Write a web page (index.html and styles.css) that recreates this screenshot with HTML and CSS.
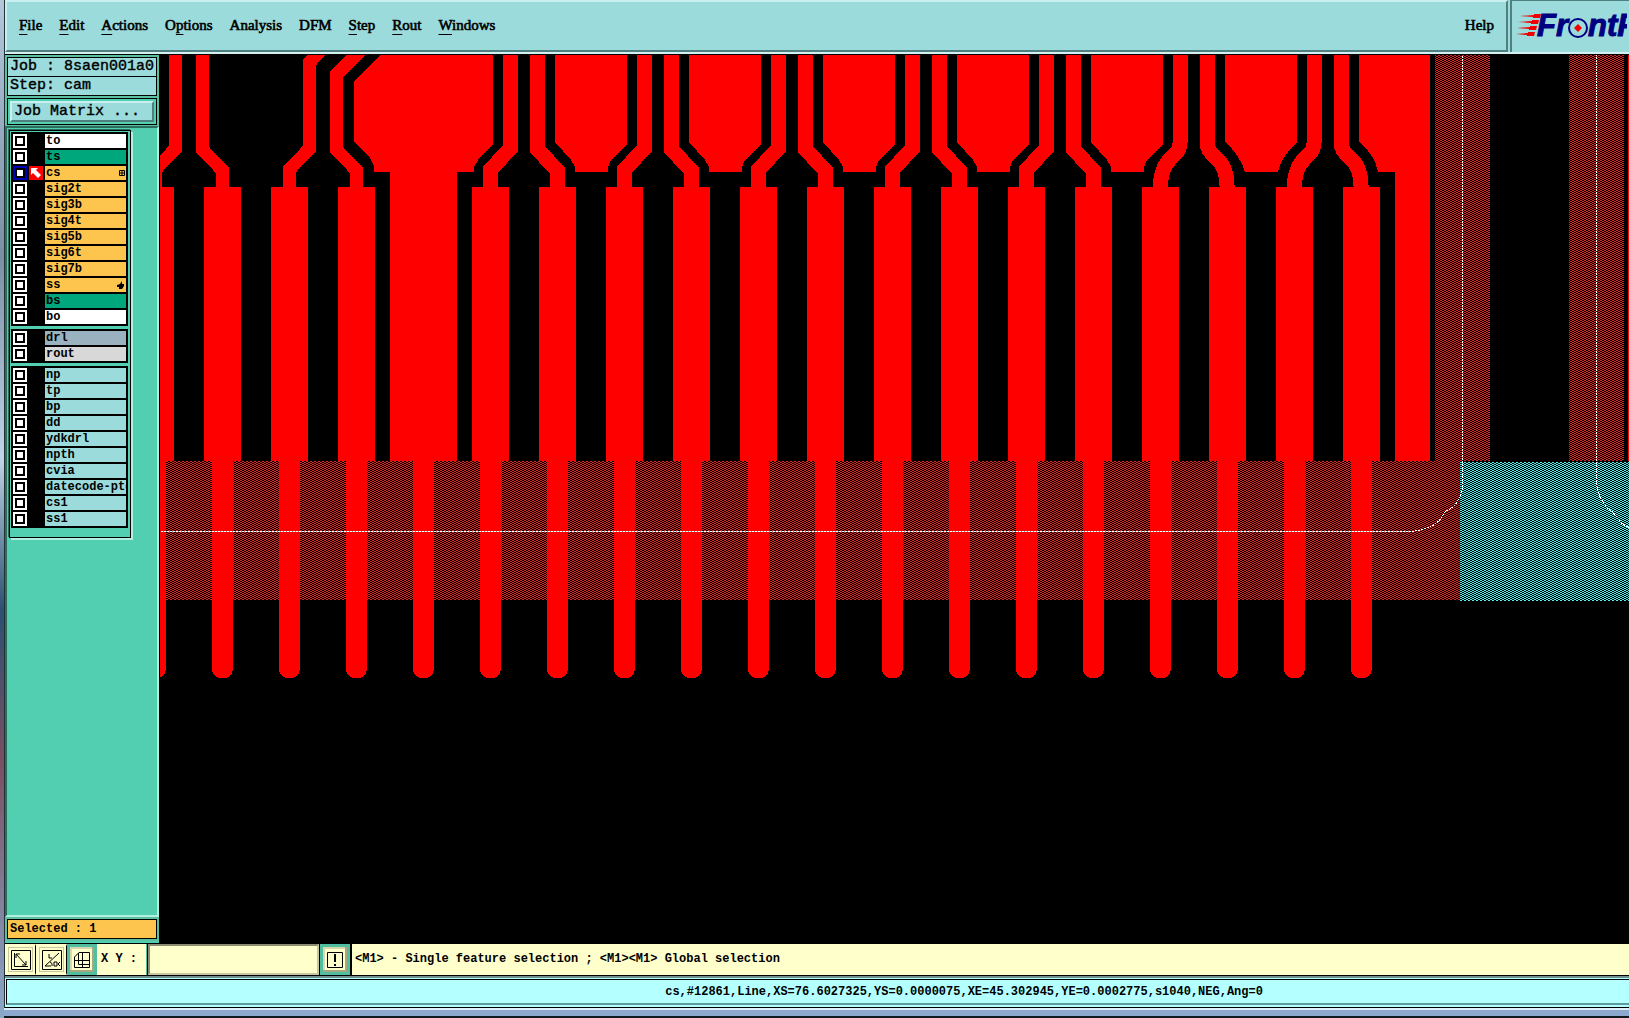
FILE: index.html
```html
<!DOCTYPE html>
<html lang="en">
<head>
    <meta charset="utf-8">
    <title>8saen001a0 / cam</title>
    <link rel="stylesheet" href="styles.css">
</head>
<body>
    <div class="window">
        <header class="top">
            <nav class="menu">
                <a href="#"><u>F</u>ile</a>
                <a href="#"><u>E</u>dit</a>
                <a href="#"><u>A</u>ctions</a>
                <a href="#">O<u>p</u>tions</a>
                <a href="#">Analysis</a>
                <a href="#">DFM</a>
                <a href="#"><u>S</u>tep</a>
                <a href="#"><u>R</u>out</a>
                <a href="#"><u>W</u>indows</a>
                <a href="#" class="help">Help</a>
            </nav>
            <div class="logo">
                <svg width="115" height="48">
                    <g fill="#f00000">
                        <path d="M8 15 L22 14 V13 H29 L28 17 H21 V16 Z"/>
                        <path d="M6 21 L20 20 V19 H27 L26 23 H19 V22 Z"/>
                        <path d="M5 27 L18 26 V25 H25 L24 29 H17 V28 Z"/>
                        <path d="M4 33 L16 32 V31 H23 L22 35 H15 V34 Z"/>
                    </g>
                    <text x="25" y="35">Fr</text>
                    <circle cx="66" cy="27" r="9" fill="none" stroke="#000080" stroke-width="2"/>
                    <path d="M66 23 L70 27 L66 31 L62 27 Z" fill="#f00000"/>
                    <text x="76" y="35">ntF</text>
                </svg>
            </div>
        </header>

        <main class="work">
            <aside class="side">
                <div class="job">
                    <div class="job-line">Job : 8saen001a0</div>
                    <div class="job-line">Step: cam</div>
                    <div class="matrix"><button type="button">Job Matrix ...</button></div>
                </div>
                <div class="layers">
                    <div class="list">
                        <div class="group">
                            <div class="layer white"><input type="checkbox" id="to"><label for="to">to</label></div>
                            <div class="layer green"><input type="checkbox" id="ts"><label for="ts">ts</label></div>
                            <div class="layer gold work-layer">
                                <input type="checkbox" id="cs">
                                <svg class="arrow" width="14" height="14"><rect width="14" height="14" fill="#f00"/><path d="M2 2 H9 L7 4 L12 9 L9 12 L4 7 L2 9 Z" fill="#fff"/></svg>
                                <label for="cs">cs<svg class="mark" width="6" height="6"><path d="M0.5 0.5 H5.5 V5.5 H0.5 Z M3 0 V6 M0 3 H6" fill="none" stroke="#000"/></svg></label>
                            </div>
                            <div class="layer gold"><input type="checkbox" id="sig2t"><label for="sig2t">sig2t</label></div>
                            <div class="layer gold"><input type="checkbox" id="sig3b"><label for="sig3b">sig3b</label></div>
                            <div class="layer gold"><input type="checkbox" id="sig4t"><label for="sig4t">sig4t</label></div>
                            <div class="layer gold"><input type="checkbox" id="sig5b"><label for="sig5b">sig5b</label></div>
                            <div class="layer gold"><input type="checkbox" id="sig6t"><label for="sig6t">sig6t</label></div>
                            <div class="layer gold"><input type="checkbox" id="sig7b"><label for="sig7b">sig7b</label></div>
                            <div class="layer gold"><input type="checkbox" id="ss"><label for="ss">ss<svg class="mark" width="8" height="8"><path d="M0 4 L3 3 L5 0 V3 H7 V5 L5 8 H2 V6 H0 Z"/></svg></label></div>
                            <div class="layer green"><input type="checkbox" id="bs"><label for="bs">bs</label></div>
                            <div class="layer white"><input type="checkbox" id="bo"><label for="bo">bo</label></div>
                        </div>
                        <div class="group">
                            <div class="layer steel"><input type="checkbox" id="drl"><label for="drl">drl</label></div>
                            <div class="layer gray"><input type="checkbox" id="rout"><label for="rout">rout</label></div>
                        </div>
                        <div class="group">
                            <div class="layer"><input type="checkbox" id="np"><label for="np">np</label></div>
                            <div class="layer"><input type="checkbox" id="tp"><label for="tp">tp</label></div>
                            <div class="layer"><input type="checkbox" id="bp"><label for="bp">bp</label></div>
                            <div class="layer"><input type="checkbox" id="dd"><label for="dd">dd</label></div>
                            <div class="layer"><input type="checkbox" id="ydkdrl"><label for="ydkdrl">ydkdrl</label></div>
                            <div class="layer"><input type="checkbox" id="npth"><label for="npth">npth</label></div>
                            <div class="layer"><input type="checkbox" id="cvia"><label for="cvia">cvia</label></div>
                            <div class="layer"><input type="checkbox" id="datecode"><label for="datecode">datecode-ptd</label></div>
                            <div class="layer"><input type="checkbox" id="cs1"><label for="cs1">cs1</label></div>
                            <div class="layer"><input type="checkbox" id="ss1"><label for="ss1">ss1</label></div>
                        </div>
                    </div>
                </div>
                <div class="selected">Selected : 1</div>
            </aside>

            <div class="board">
                <svg width="100%" height="100%" shape-rendering="crispEdges">
                    <defs>
                        <pattern id="hatchRed" width="4" height="2" patternUnits="userSpaceOnUse">
                            <rect width="2" height="1" fill="#dc2420"/>
                            <rect x="2" y="1" width="2" height="1" fill="#dc2420"/>
                        </pattern>
                        <pattern id="hatchCyan" width="4" height="2" patternUnits="userSpaceOnUse">
                            <rect width="2" height="1" fill="#50ecec"/>
                            <rect x="2" y="1" width="2" height="1" fill="#50ecec"/>
                        </pattern>
                        <!-- everything below is drawn around the pad centre, x = 0 -->
                        <rect id="finger" x="-10" y="440" width="21" height="238" rx="9"/>
                        <rect id="pad" x="-18" y="187" width="37" height="274"/>
                        <path id="toRight" d="M20 50 V149 L0 170 V190"/>
                        <path id="toLeft" d="M-20 50 V149 L0 170 V190"/>
                        <path id="arcRight" d="M20 50 V143 Q20 151 12 157 Q0 168 0 190"/>
                        <path id="arcLeft" d="M-20 50 V143 Q-20 150 -11 158 Q1 168 0 190"/>
                        <path id="pour" d="M-2 50 V142 L14 160 L18 167 V172 H51 V167 L54 160 L70 144 V50 Z"/>
                        <path id="pourArc" d="M-2 50 V142 Q13 155 18 172 H51 Q54 157 70 142 V50 Z"/>
                    </defs>
                    <g transform="translate(-160 -55)">
                        <!-- hatched keepout and board edge -->
                        <rect x="161" y="461" width="1299" height="139" fill="url(#hatchRed)"/>
                        <rect x="1435" y="54" width="55" height="407" fill="url(#hatchRed)"/>
                        <rect x="1569" y="54" width="55" height="407" fill="url(#hatchRed)"/>
                        <rect x="1460" y="462" width="1000" height="139" fill="url(#hatchCyan)"/>

                        <g fill="#f00">
                            <rect x="1628" y="54" width="20" height="407"/>
                            <path d="M385 50 L354 81 V142 L370 158 L374 166 V172 H390 V461 H457 V172 H474 V167 L478 160 L493 144 V50 Z"/>
                            <use href="#pour" x="557"/>
                            <use href="#pour" x="691"/>
                            <use href="#pour" x="825"/>
                            <use href="#pour" x="959"/>
                            <use href="#pour" x="1093"/>
                            <use href="#pourArc" x="1227"/>
                            <path d="M1359 50 V142 Q1375 155 1378 172 H1395 V461 H1430 V50 Z"/>

                            <use href="#finger" x="155"/><use href="#pad" x="155"/>
                            <use href="#finger" x="222"/><use href="#pad" x="222"/>
                            <use href="#finger" x="289"/><use href="#pad" x="289"/>
                            <use href="#finger" x="356"/><use href="#pad" x="356"/>
                            <use href="#finger" x="423"/>
                            <use href="#finger" x="490"/><use href="#pad" x="490"/>
                            <use href="#finger" x="557"/><use href="#pad" x="557"/>
                            <use href="#finger" x="624"/><use href="#pad" x="624"/>
                            <use href="#finger" x="691"/><use href="#pad" x="691"/>
                            <use href="#finger" x="758"/><use href="#pad" x="758"/>
                            <use href="#finger" x="825"/><use href="#pad" x="825"/>
                            <use href="#finger" x="892"/><use href="#pad" x="892"/>
                            <use href="#finger" x="959"/><use href="#pad" x="959"/>
                            <use href="#finger" x="1026"/><use href="#pad" x="1026"/>
                            <use href="#finger" x="1093"/><use href="#pad" x="1093"/>
                            <use href="#finger" x="1160"/><use href="#pad" x="1160"/>
                            <use href="#finger" x="1227"/><use href="#pad" x="1227"/>
                            <use href="#finger" x="1294"/><use href="#pad" x="1294"/>
                            <use href="#finger" x="1361"/><use href="#pad" x="1361"/>
                        </g>

                        <!-- traces -->
                        <g fill="none" stroke="#f00" stroke-width="13">
                            <use href="#toRight" x="155"/>
                            <use href="#toLeft" x="222"/>
                            <path d="M329 42 L309 63 V149 L289 170 V190"/>
                            <path d="M376 35 L336 75 V149 L356 170 V190"/>
                        </g>
                        <g fill="none" stroke="#f00" stroke-width="15">
                            <use href="#toRight" x="490"/><use href="#toLeft" x="557"/>
                            <use href="#toRight" x="624"/><use href="#toLeft" x="691"/>
                            <use href="#toRight" x="758"/><use href="#toLeft" x="825"/>
                            <use href="#toRight" x="892"/><use href="#toLeft" x="959"/>
                            <use href="#toRight" x="1026"/><use href="#toLeft" x="1093"/>
                            <use href="#arcRight" x="1160"/><use href="#arcLeft" x="1227"/>
                            <use href="#arcRight" x="1294"/><use href="#arcLeft" x="1361"/>
                        </g>

                        <!-- profile line -->
                        <path d="M161 531.5 H1410" stroke="#8c8c8c"/>
                        <path class="profile" d="M161 531.5 H1410 Q1427 530 1435 524 Q1440 521 1445 512 L1453 507 Q1459 501 1462 490 V54"/>
                        <path class="profile" d="M1596.5 54 V483 Q1597 495 1607 508 L1613 512 L1620 522 L1632 530"/>
                    </g>
                </svg>
            </div>
        </main>

        <footer>
            <div class="tools">
                <button type="button" class="tool" aria-label="Zoom to point">
                    <svg width="20" height="20"><path d="M0.5 0.5 H19.5 V19.5 H0.5 Z M3.5 3 V16.5 H17 M5 4 L15 15 M5 8 V4 H9 M11 15 H15 V11"/></svg>
                </button>
                <button type="button" class="tool" aria-label="Angle">
                    <svg width="20" height="20"><path d="M0.5 0.5 H19.5 V19.5 H0.5 Z M3 16 L17 3 M3 16 H9 M7 4 V8 H10 M8 12 Q11 13 10 16 M12 12 V16 H15 V12 Z M18 12 L16 14 L18 16"/></svg>
                </button>
                <button type="button" class="tool on" aria-label="Grid snap">
                    <svg width="16" height="16"><path d="M5 0.5 H15.5 V15.5 H0.5 V5 Z M8.5 0 V16 M0 8.5 H16 M4.5 1 V12.5 H15"/></svg>
                </button>
                <label class="xy" for="xy">X Y :</label>
                <input class="coords" type="text" id="xy">
                <button type="button" class="tool on" aria-label="Messages">
                    <svg width="16" height="16"><path d="M0.5 0.5 H15.5 V15.5 H0.5 Z"/><path d="M8 2 V10 M8 12 V14" stroke-width="2"/></svg>
                </button>
                <div class="message">&lt;M1&gt; - Single feature selection ; &lt;M1&gt;&lt;M1&gt; Global selection</div>
            </div>
            <div class="status">
                <div class="status-text">cs,#12861,Line,XS=76.6027325,YS=0.0000075,XE=45.302945,YE=0.0002775,s1040,NEG,Ang=0</div>
            </div>
        </footer>
    </div>
    <div class="desktop"></div>
</body>
</html>
```
FILE: styles.css
```css
* {
    box-sizing: border-box;
}
body {
    margin: 0;
    height: 100vh;
    display: flex;
    flex-direction: column;
    overflow: hidden;
    padding-left: 4px;
    background: linear-gradient(#b4c8dc, #7c8ea4 25%, #c0d4e4 45%, #2c5070 60%, #7a5064 75%, #8aa8c8);
    font-family: "Liberation Mono", monospace;
    font-size: 12px;
    font-weight: bold;
    color: #000;
}
.window {
    flex: 1;
    min-height: 0;
    display: flex;
    flex-direction: column;
    border-left: 1px solid #203438;
    background: #000;
}

/* menu bar */
.top {
    display: flex;
    height: 54px;
    border-bottom: 2px solid #d4f0f0;
    background: #9bdbdb;
}
.menu {
    flex: 1;
    display: flex;
    align-items: center;
    gap: 17px;
    padding: 0 12px 2px;
    border: 2px solid;
    border-color: #c8f0f0 #4f7f7f #4f7f7f #c8f0f0;
    font-family: "Liberation Serif", serif;
    font-size: 15px;
    font-weight: normal;
    -webkit-text-stroke: 0.6px #000;
}
.menu a {
    color: #000;
    text-decoration: none;
}
.menu u {
    text-underline-offset: 4px;
    text-decoration-thickness: 1px;
}
.menu .help {
    margin-left: auto;
}
.logo {
    width: 119px;
    border-left: 2px solid #4f7f7f;
    border-top: 1px solid #4f7f7f;
    margin-left: 2px;
    overflow: hidden;
}
.logo text {
    font: italic bold 31px "Liberation Sans", sans-serif;
    fill: #000080;
    stroke: #000080;
}

.work {
    flex: 1;
    min-height: 0;
    display: flex;
    border-top: 1px solid #000;
}

/* left panel */
.side {
    width: 154px;
    display: flex;
    flex-direction: column;
    background: #52ceb0;
}
.job {
    padding: 2px 2px 1px;
    background: #5cbfa0;
    font-size: 15px;
    font-weight: normal;
    -webkit-text-stroke: 0.4px #000;
}
.job-line {
    height: 20px;
    margin-bottom: -1px;
    padding-left: 2px;
    border: 1px solid #000;
    background: #9bdbdb;
    line-height: 18px;
    white-space: nowrap;
}
.matrix {
    margin-top: 3px;
    padding: 2px;
    border: 1px solid #000;
    background: #52ceb0;
}
.matrix button {
    display: block;
    width: 100%;
    height: 21px;
    padding: 0 2px;
    border: 2px solid;
    border-color: #c8f0f0 #4f7f7f #4f7f7f #c8f0f0;
    background: #9bdbdb;
    font: inherit;
    line-height: 16px;
    color: #000;
    text-align: left;
    -webkit-text-stroke: inherit;
}
.layers {
    flex: 1;
    padding: 2px 25px 0 2px;
    border: 2px solid;
    border-color: #2c6c5c #b0f0e0 #b0f0e0 #2c6c5c;
}
.list {
    width: 122px;
    padding: 1px 1px 9px;
    border: 1px solid #000;
    box-shadow: 2px 2px #b0f0e0, -1px -1px #2c6c5c;
}
.group {
    width: 117px;
    padding: 2px;
    background: #000;
    display: flex;
    flex-direction: column;
    gap: 2px;
}
.group + .group {
    margin-top: 3px;
}
.layer {
    display: flex;
    height: 14px;
}
.layer input {
    appearance: none;
    width: 14px;
    height: 14px;
    margin: 0;
    padding: 2px;
    border: 2px solid #fff;
    outline: 2px solid #000;
    outline-offset: -4px;
    background: #fff;
}
.layer label {
    flex: 1;
    display: flex;
    justify-content: space-between;
    align-items: center;
    margin-left: 18px;
    padding: 0 1px;
    background: #9bdbdb;
    line-height: 14px;
    overflow: hidden;
    white-space: nowrap;
}
.white label { background: #fff; }
.green label { background: #00a67c; }
.gold label { background: #fdc54e; }
.steel label { background: #9ab2c0; }
.gray label { background: #d8d8d8; }
.work-layer input {
    border-color: #0000b8;
}
.layer .arrow {
    margin-left: 2px;
}
.layer .arrow + label {
    margin-left: 2px;
}
.mark {
    flex: none;
}
.selected {
    height: 20px;
    margin: 2px 2px 4px;
    padding-left: 2px;
    border: 1px solid #000;
    outline: 2px solid #5cbfa0;
    background: #fdc54e;
    line-height: 18px;
}

.board {
    flex: 1;
    min-width: 0;
    padding-left: 1px;
    background: #000;
}
.board svg {
    display: block;
}
.profile {
    fill: none;
    stroke: #fff;
    stroke-dasharray: 2 1;
}

/* bottom bars */
.tools {
    display: flex;
    height: 33px;
    border-top: 1px solid #000;
    border-bottom: 1px solid #000;
    background: #ffffcc;
}
.tool {
    width: 31px;
    padding: 0;
    display: flex;
    align-items: center;
    justify-content: center;
    border: 2px solid #ffffcc;
    border-right: 1px solid #000;
    outline: 1px solid #c8c8a0;
    outline-offset: -4px;
    background: #ffffcc;
}
.tool.on {
    width: 30px;
    border: 3px solid #52bea0;
    box-shadow: inset -2px -2px #a8a880, inset 2px 2px #d8d8b0;
    outline: none;
}
.xy {
    width: 50px;
    padding-left: 4px;
    border-right: 1px solid #52bea0;
    line-height: 30px;
}
.tool path {
    fill: none;
    stroke: #000;
}
.coords {
    width: 171px;
    margin: 0 1px;
    border: 2px solid;
    border-color: #8c8c74 #c8c8a0 #c8c8a0 #8c8c74;
    outline: 1px solid #000;
    background: #ffffcc;
    font: inherit;
}
.message {
    flex: 1;
    padding-left: 3px;
    border-left: 2px solid #000;
    line-height: 30px;
    white-space: nowrap;
}
.status {
    padding: 1px 0 2px 1px;
    border-top: 2px solid #709090;
    border-bottom: 1px solid #000;
    background: #b4ffff;
}
.status-text {
    height: 26px;
    padding-left: 18%;
    border-top: 1px solid #000;
    border-bottom: 2px solid #5c9c9c;
    border-left: 1px solid #000;
    line-height: 24px;
    text-align: center;
    white-space: nowrap;
}
.desktop {
    height: 10px;
    border-top: 2px solid #e0f0ff;
    border-bottom: 2px solid #101820;
    background: #8ca8cc;
}
```
